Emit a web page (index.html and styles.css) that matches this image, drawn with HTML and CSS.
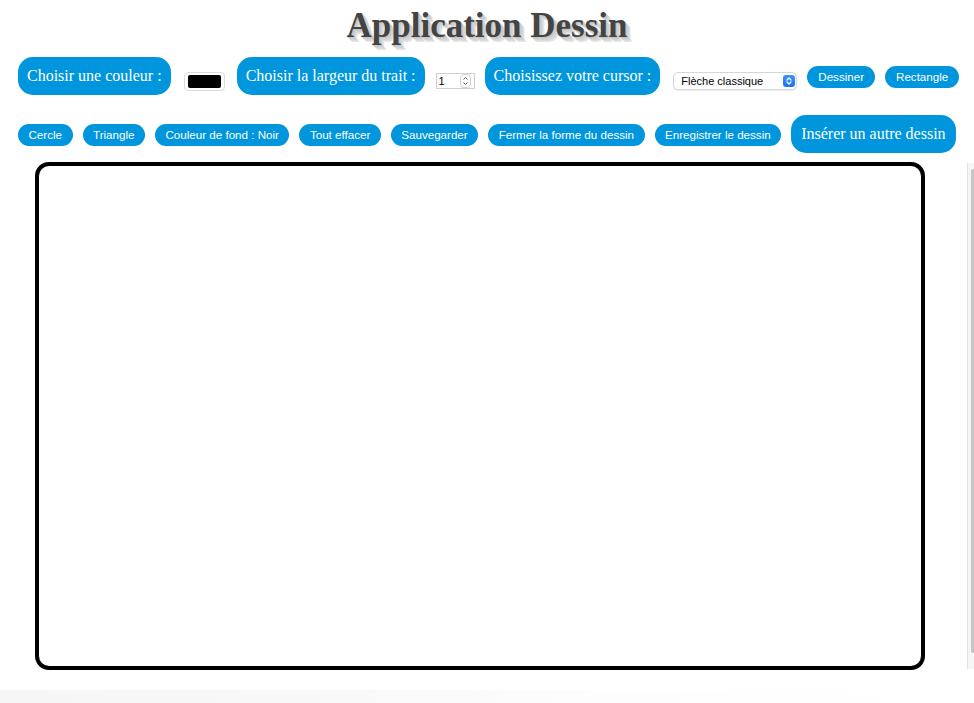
FILE: index.html
```html
<!DOCTYPE html>
<html lang="fr">
<head>
<meta charset="utf-8">
<title>Application Dessin</title>
<link rel="stylesheet" href="styles.css">
</head>
<body>
<h1 class="title">Application Dessin</h1>

<div class="toolbar row-one">
  <span class="label-btn">Choisir une couleur :</span>
  <span class="color-input"><span class="swatch"></span></span>
  <span class="label-btn">Choisir la largeur du trait :</span>
  <span class="number-input">
    <span class="num-value">1</span>
    <span class="spinner">
      <svg width="7" height="12" viewBox="0 0 7 12"><path d="M1.5 4.5 L3.5 2.5 L5.5 4.5 M1.5 7.5 L3.5 9.5 L5.5 7.5" fill="none" stroke="#555" stroke-width="1"/></svg>
    </span>
  </span>
  <span class="label-btn">Choisissez votre cursor :</span>
  <span class="select-input">
    <span class="select-text">Flèche classique</span>
    <span class="select-knob">
      <svg width="8" height="10" viewBox="0 0 8 10"><path d="M2 4 L4 2 L6 4 M2 6 L4 8 L6 6" fill="none" stroke="#fff" stroke-width="1.3" stroke-linecap="round" stroke-linejoin="round"/></svg>
    </span>
  </span>
  <button class="small-btn">Dessiner</button>
  <button class="small-btn">Rectangle</button>
</div>

<div class="toolbar row-two">
  <button class="small-btn">Cercle</button>
  <button class="small-btn">Triangle</button>
  <button class="small-btn">Couleur de fond : Noir</button>
  <button class="small-btn">Tout effacer</button>
  <button class="small-btn">Sauvegarder</button>
  <button class="small-btn">Fermer la forme du dessin</button>
  <button class="small-btn">Enregistrer le dessin</button>
  <button class="label-btn big-btn">Insérer un autre dessin</button>
</div>

<div class="workspace">
  <div class="canvas"></div>
  <div class="scrollbar"><div class="thumb"></div></div>
</div>
<div class="footer-band"></div>
</body>
</html>
```

FILE: styles.css
```css
html, body {
  margin: 0;
  padding: 0;
  background: #ffffff;
}

body {
  width: 974px;
  height: 703px;
  overflow: hidden;
  font-family: "Liberation Sans", Arial, sans-serif;
}

.title {
  margin: 0;
  padding-top: 6px;
  height: 40px;
  line-height: 40px;
  text-align: center;
  font-family: "Liberation Serif", "Times New Roman", serif;
  font-weight: bold;
  font-size: 35px;
  color: #444444;
  text-shadow: 1px 1px 0 #c6c6c6, 2px 2px 0 #cecece, 3px 3px 0 #d4d4d4, 4px 4px 0 #dcdcdc, 5px 5px 0 #e6e6e6;
}

.toolbar {
  display: flex;
  align-items: center;
  gap: 10px;
  padding-left: 18px;
  height: 38px;
}

.row-one {
  margin-top: 11px;
}

.row-two {
  margin-top: 20px;
}

.label-btn {
  display: inline-block;
  box-sizing: border-box;
  height: 38px;
  padding: 10px 9px;
  border: none;
  border-radius: 15px;
  background: #0096dd;
  color: #ffffff;
  font-family: "Liberation Serif", "Times New Roman", serif;
  font-size: 16px;
  line-height: 18px;
  white-space: nowrap;
}

.big-btn {
  padding: 10px 10px;
}

.small-btn {
  box-sizing: border-box;
  height: 22px;
  margin-top: 1px;
  padding: 4px 10.5px;
  border: none;
  border-radius: 11px;
  background: #0096dd;
  color: #ffffff;
  font-family: "Liberation Sans", Arial, sans-serif;
  font-size: 11.6px;
  line-height: 14px;
  white-space: nowrap;
}

.row-one .small-btn {
  padding: 4px 11px;
}

.row-two .small-btn {
  margin-top: 2px;
}

.color-input {
  display: inline-flex;
  box-sizing: border-box;
  width: 41px;
  height: 19px;
  margin: 11px 2px 0 3px;
  padding: 2px 3px;
  border: 1px solid #dcdcdc;
  border-radius: 4px;
  background: #ffffff;
}

.swatch {
  flex: 1;
  background: #000000;
  border-radius: 2px;
}

.number-input {
  display: inline-flex;
  align-items: center;
  justify-content: space-between;
  box-sizing: border-box;
  width: 39px;
  height: 16px;
  margin: 10px 0 0 1px;
  padding: 0 2px 0 2px;
  border: 1px solid #cfcfcf;
  background: #ffffff;
  font-size: 11px;
  color: #000000;
}

.num-value {
  line-height: 14px;
}

.spinner {
  display: inline-flex;
  align-items: center;
  justify-content: center;
  width: 9px;
  height: 12px;
  border: 1px solid #d4d4d4;
  border-radius: 4px;
  margin-right: 1px;
}

.select-input {
  display: inline-flex;
  align-items: center;
  justify-content: space-between;
  box-sizing: border-box;
  width: 124px;
  height: 18px;
  margin: 9px 0 0 3px;
  padding: 0 1px 0 7px;
  border: 1px solid #d6d6d6;
  border-radius: 5px;
  background: #ffffff;
  box-shadow: 0 1px 1px rgba(0, 0, 0, 0.08);
  font-size: 11px;
  color: #000000;
}

.select-knob {
  display: inline-flex;
  align-items: center;
  justify-content: center;
  width: 12px;
  height: 12px;
  border-radius: 3px;
  background: linear-gradient(#3b93ff, #1a73f0);
}

.workspace {
  display: flex;
  justify-content: space-between;
  align-items: flex-start;
  margin-top: 9px;
  padding-left: 35px;
}

.canvas {
  box-sizing: border-box;
  width: 890px;
  height: 508px;
  border: 4px solid #000000;
  border-radius: 14px;
  background: #ffffff;
}

.scrollbar {
  box-sizing: border-box;
  width: 7px;
  height: 506px;
  margin-top: 1px;
  padding: 6px 0 16px 3px;
  border-left: 1px solid #e2e2e2;
  background: #f6f6f6;
}

.thumb {
  height: 100%;
  background: #c6c6c6;
  border-radius: 2px 0 0 2px;
}

.footer-band {
  margin-top: 20px;
  height: 13px;
  background: linear-gradient(90deg, #f6f6f6 0%, #f8f8f8 30%, #fdfdfd 60%, #ffffff 100%);
}
```
